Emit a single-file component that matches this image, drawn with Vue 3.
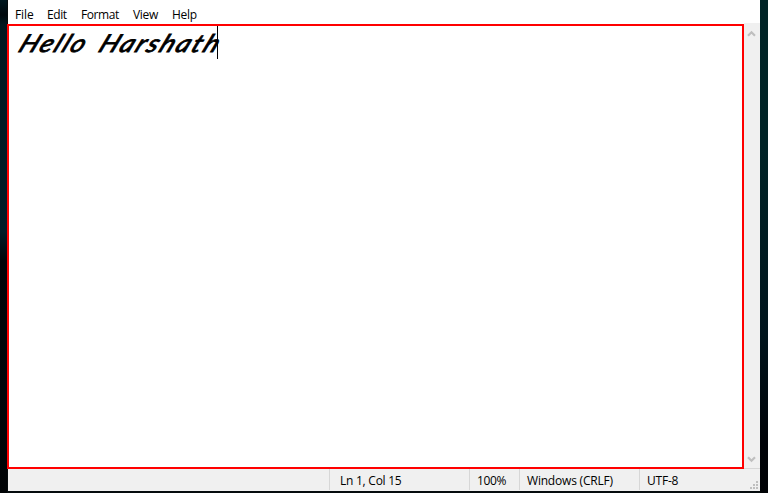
<script setup>
const menus = ['File', 'Edit', 'Format', 'View', 'Help']
const status = [
  { key: 'position', text: 'Ln 1, Col 15' },
  { key: 'zoom', text: '100%' },
  { key: 'ending', text: 'Windows (CRLF)' },
  { key: 'encoding', text: 'UTF-8' },
]
const words = [
  { text: 'Hello', x: 17, width: 67 },
  { text: 'Harshath', x: 97, width: 120.5 },
]
const grip = [[6, 0], [3, 3], [6, 3], [0, 6], [3, 6], [6, 6]]
</script>

<template>
  <div class="desktop">
    <div class="window">
      <nav class="menubar">
        <span v-for="m in menus" :key="m" :class="['menu', m.toLowerCase()]">{{ m }}</span>
      </nav>
      <div class="body">
        <main class="editor">
          <svg class="line" width="230" height="40" viewBox="9 26 230 40">
            <g v-for="w in words" :key="w.text" :transform="`translate(${w.x} 52) skewX(-25)`">
              <text :textLength="w.width" lengthAdjust="spacingAndGlyphs">{{ w.text }}</text>
            </g>
          </svg>
          <i class="caret"></i>
        </main>
        <aside class="scrollbar">
          <svg width="9" height="7" viewBox="0 0 9 7"><path d="M1 5.7 4.5 2.2 8 5.7" /></svg>
          <svg width="9" height="7" viewBox="0 0 9 7"><path d="M1 1.3 4.5 4.8 8 1.3" /></svg>
        </aside>
      </div>
      <footer class="statusbar">
        <span v-for="s in status" :key="s.key" :class="['cell', s.key]">{{ s.text }}</span>
        <svg class="grip" width="8" height="8" viewBox="0 0 8 8">
          <rect v-for="([x, y], i) in grip" :key="i" :x="x" :y="y" width="2" height="2" />
        </svg>
      </footer>
    </div>
  </div>
</template>

<style>
body { margin: 0; overflow: hidden; }
</style>

<style scoped>
.desktop {
  box-sizing: border-box;
  width: 768px;
  height: 493px;
  padding: 0 8px 2px 7px;
  background:
    linear-gradient(#002426 0, #002326 30%, #00141c 68%, #000308 90%, #000205) right / 8px 100% no-repeat,
    linear-gradient(#001820 0, #00080d 3%, #001820 5%, #001a24 25%, #001c27 47%, #000408 53%, #00060a 80%, #000305) left / 7px 100% no-repeat,
    #050b0d;
  font: 12px "Open Sans", "Noto Sans", sans-serif;
  color: #000;
}
.window { display: flex; flex-direction: column; height: 491px; }
.menubar {
  display: flex;
  height: 24px;
  margin-left: 1px;
  padding-left: 7px;
  box-sizing: border-box;
  background: linear-gradient(#fff 23px, #f0f0f0 23px) right / 16px 100% no-repeat, #fff;
}
.menu { line-height: 17px; padding-top: 6px; height: 17px; white-space: nowrap; }
.file { width: 32px; letter-spacing: -0.1px; }
.edit { width: 34px; letter-spacing: -0.4px; }
.format { width: 52px; letter-spacing: -0.4px; }
.view { width: 39px; letter-spacing: -0.3px; }
.help { letter-spacing: -0.3px; }
.body { display: flex; height: 445px; }
.editor {
  position: relative;
  box-sizing: border-box;
  width: 737px;
  border: 2px solid #f00;
  background: #fff;
}
.line { display: block; overflow: visible; }
.line text { font: italic 400 24.5px Lato, sans-serif; letter-spacing: 2px; stroke: #000; stroke-width: 0.9px; }
.caret { position: absolute; left: 208px; top: 0; width: 1px; height: 33px; background: #000; }
.scrollbar {
  box-sizing: border-box;
  display: flex;
  flex-direction: column;
  justify-content: space-between;
  width: 16px;
  padding: 6px 0 5px 3px;
  background: #f0f0f0;
  border-bottom: 1px solid #d7d7d7;
}
.scrollbar path { fill: none; stroke: #bfbfbf; stroke-width: 2.2; }
.statusbar {
  position: relative;
  display: flex;
  flex: 1;
  margin-left: 1px;
  padding-left: 321px;
  background: #f0f0f0;
}
.cell {
  box-sizing: border-box;
  height: 21px;
  border-left: 1px solid #d7d7d7;
  line-height: 24px;
  white-space: nowrap;
}
.position { width: 140px; padding-left: 10px; letter-spacing: -0.25px; }
.zoom { width: 50px; padding-left: 7px; letter-spacing: -0.4px; }
.ending { width: 120px; padding-left: 7px; letter-spacing: -0.2px; }
.encoding { padding-left: 7px; letter-spacing: -0.2px; }
.grip { position: absolute; right: 2px; bottom: 2px; fill: #bfbfbf; }
</style>
